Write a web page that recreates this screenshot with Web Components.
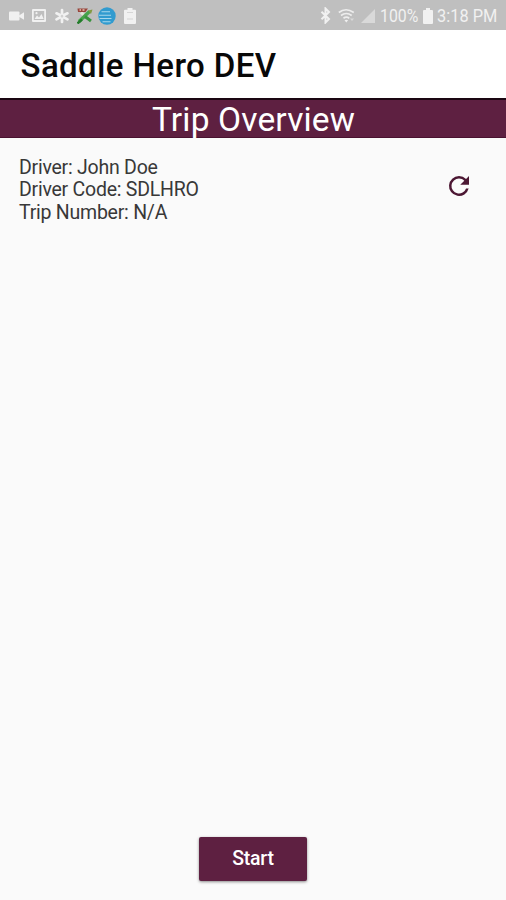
<!DOCTYPE html>
<html lang="en">
<head>
<meta charset="utf-8">
<title>Saddle Hero DEV</title>
<style>
    html, body {
        margin: 0;
        height: 100%;
    }

    body {
        background: #fafafa;
        font-family: Roboto, "Liberation Sans", sans-serif;
        overflow: hidden;
    }
</style>
</head>
<body>
<trip-screen>
    <status-bar slot="top" battery="100%" time="3:18 PM"></status-bar>
    <app-header slot="top">Saddle Hero DEV</app-header>
    <page-banner slot="top">Trip Overview</page-banner>
    <trip-info driver="John Doe" code="SDLHRO" trip="N/A"></trip-info>
    <action-button slot="bottom">Start</action-button>
</trip-screen>

<script>
class TripScreen extends HTMLElement {

    connectedCallback() {
        this.attachShadow({ mode: "open" });
        this.shadowRoot.innerHTML = `
            <style>
                :host { display: flex; flex-direction: column; height: 900px; background: #fafafa; }
                main { flex: 1; }
                footer { display: flex; justify-content: center; padding-bottom: 19px; }
            </style>
            <slot name="top"></slot>
            <main><slot></slot></main>
            <footer><slot name="bottom"></slot></footer>
        `;
    }
}
customElements.define("trip-screen", TripScreen);


class StatusBar extends HTMLElement {

    connectedCallback() {
        this.attachShadow({ mode: "open" });
        this.render();
    }

    render() {
        this.shadowRoot.innerHTML = `
            <style>
                :host {
                    display: flex;
                    justify-content: space-between;
                    box-sizing: border-box;
                    height: 30px;
                    padding: 1px 9px 0 8px;
                    background: #bfbfbf;
                    color: #f1f1f1;
                    font-size: 18px;
                    line-height: 28px;
                }
                div { display: flex; align-items: center; }
                svg { display: block; fill: #f1f1f1; }
                .left { gap: 7px; }
                .left svg { width: 16px; height: 16px; }
                .left .att { width: 18px; height: 18px; margin: 0 -1px 0 -2px; }
                .bt { margin-right: 7px; }
                .wifi { margin-right: 5px; }
                .signal { margin-right: 5px; }
                .battery { margin: 0 4px 0 5px; }
                span { display: block; white-space: nowrap; transform-origin: 0 50%; }
                .pct { width: 38px; transform: scaleX(.88); }
                .time { width: 60px; transform: scaleX(.91); }
            </style>
            <div class="left">
                <svg viewBox="0 0 16 16"><rect x="1" y="3.5" width="10.5" height="9" rx="1"/><path d="M11 7.5 16.5 4v8L11 8.7z"/></svg>
                <svg viewBox="0 0 16 16"><path fill-rule="evenodd" d="M2 1h12q1 0 1 1v11q0 1-1 1H2q-1 0-1-1V2q0-1 1-1zm.8 2v9h10.4V3z"/><path d="M3.5 11 6 7.5l2 2L10.5 6l2.2 5z"/><circle cx="5.5" cy="5.2" r="1.1"/></svg>
                <svg viewBox="0 0 16 16"><path fill="none" stroke="#f1f1f1" stroke-width="2.7" stroke-linecap="round" d="M8 5.8V2M6 7 2.5 5.3M10 7l3.5-1.7M6 9.3l-3.5 2M10 9.3l3.5 2M8 10.5V14"/><circle cx="8" cy="8" r="1.2" style="fill:#d2d2d2"/></svg>
                <svg viewBox="0 0 16 16"><path d="M4 4.5 9 9" stroke="#e6e6da" stroke-width="3"/><path d="M2 13.5 12.5 3.5" stroke="#47a34b" stroke-width="3.4"/><path d="M8 8.5 14 13" stroke="#39933e" stroke-width="3"/><path d="M.5 15.5 5 11.5" stroke="#237c2b" stroke-width="2.4"/><path d="M.5.5H11L8.5 4H1z" style="fill:#98443a"/><path d="M2.5 2H4M5.5 2h2" stroke="#e6c2b5" stroke-width="1.4"/><path d="M11 2.5 15.5 1.5 14 6z" style="fill:#839a42"/></svg>
                <svg class="att" viewBox="0 0 18 18"><circle cx="9" cy="9" r="8.7" style="fill:#319bcf"/><g fill="none" stroke="#a7d8ec" stroke-width="1.1"><path d="M3.5 4.8H12M1 8.2h12M1.5 11.5h12M4.500 14.7h8"/></g></svg>
                <svg viewBox="0 0 16 16"><path d="M5.5 0h5v1.7H13q1 0 1 1V15q0 1-1 1H3q-1 0-1-1V2.7q0-1 1-1h2.5z"/><path d="M5 4.5h6M5 11h6" stroke="#d6d6d6" stroke-width="1.2"/></svg>
            </div>
            <div class="right">
                <svg class="bt" width="11" height="17" viewBox="0 0 11 17"><path d="M1.5 4.7 9 12l-3.5 3.5v-14L9 5 1.5 12.3" fill="none" stroke="#f1f1f1" stroke-width="2"/></svg>
                <svg class="wifi" width="18" height="16" viewBox="0 0 18 16"><g fill="none" stroke="#ededed" stroke-width="1.7"><path d="M.8 4.5q7-5.5 15 0M3 7.5q5.3-4 10.7 0M5.5 10.3q3-2.2 5.8 0"/></g><path d="M6.5 12.3q2-1.3 3.6 0L8.3 14.5z"/><path d="M12 10.5h4l-2 2.5z" style="fill:#dadada"/></svg>
                <svg class="signal" width="14" height="14" viewBox="0 0 14 14"><path d="M0 14 14 0v14z" style="fill:#d9d9d9"/></svg>
                <span class="pct">${this.getAttribute("battery")}</span>
                <svg class="battery" width="10" height="16" viewBox="0 0 10 16"><path d="M3 0h4v2h2q1 0 1 1v12q0 1-1 1H1q-1 0-1-1V3q0-1 1-1h2z"/></svg>
                <span class="time">${this.getAttribute("time")}</span>
            </div>
        `;
    }
}
customElements.define("status-bar", StatusBar);


class AppHeader extends HTMLElement {

    connectedCallback() {
        this.attachShadow({ mode: "open" });
        this.shadowRoot.innerHTML = `
            <style>
                :host {
                    display: block;
                    height: 68px;
                    padding-left: 20.5px;
                    background: #fff;
                    color: #080808;
                    font-size: 33px;
                    font-weight: 500;
                    letter-spacing: .4px;
                    line-height: 72px;
                    white-space: nowrap;
                }
            </style>
            <slot></slot>
        `;
    }
}
customElements.define("app-header", AppHeader);


class PageBanner extends HTMLElement {

    connectedCallback() {
        this.attachShadow({ mode: "open" });
        this.shadowRoot.innerHTML = `
            <style>
                :host {
                    display: block;
                    box-sizing: border-box;
                    height: 40px;
                    padding-left: 1px;
                    border-top: 2px solid #1a0712;
                    border-bottom: 1px solid #4a1230;
                    background: #5e2041;
                    color: #fff;
                    font-size: 33.5px;
                    letter-spacing: .15px;
                    line-height: 39px;
                    text-align: center;
                }
            </style>
            <slot></slot>
        `;
    }
}
customElements.define("page-banner", PageBanner);


class TripInfo extends HTMLElement {

    connectedCallback() {
        this.attachShadow({ mode: "open" });
        this.render();
    }

    render() {
        this.shadowRoot.innerHTML = `
            <style>
                :host {
                    display: flex;
                    justify-content: space-between;
                    padding: 19px 34px 0 19px;
                    color: #383838;
                    font-size: 19.5px;
                    letter-spacing: -.24px;
                    line-height: 22.3px;
                }
                p { margin: 0; }
                button { width: 28px; height: 28px; margin: 14px 0 0; padding: 0; border: 0; background: none; }
                svg { display: block; fill: #4c1733; }
            </style>
            <div>
                <p>Driver: ${this.getAttribute("driver")}</p>
                <p>Driver Code: ${this.getAttribute("code")}</p>
                <p>Trip Number: ${this.getAttribute("trip")}</p>
            </div>
            <button aria-label="Refresh">
                <svg width="30" height="30" viewBox="0 0 24 24"><path d="M17.65 6.35A7.96 7.96 0 0 0 12 4a8 8 0 1 0 7.73 10h-2.08A6 6 0 1 1 12 6c1.66 0 3.14.69 4.22 1.78L13 11h7V4z"/></svg>
            </button>
        `;
    }
}
customElements.define("trip-info", TripInfo);


class ActionButton extends HTMLElement {

    connectedCallback() {
        this.attachShadow({ mode: "open" });
        this.shadowRoot.innerHTML = `
            <style>
                :host { display: block; }
                button {
                    display: block;
                    width: 108px;
                    height: 44px;
                    padding: 0;
                    border: 0;
                    border-radius: 2px;
                    background: #5e2041;
                    box-shadow: 0 1px 3px rgba(0, 0, 0, .45);
                    color: #fff;
                    font: 500 19.5px/42px Roboto, "Liberation Sans", sans-serif;
                    letter-spacing: -.2px;
                }
            </style>
            <button><slot></slot></button>
        `;
    }
}
customElements.define("action-button", ActionButton);
</script>
</body>
</html>
